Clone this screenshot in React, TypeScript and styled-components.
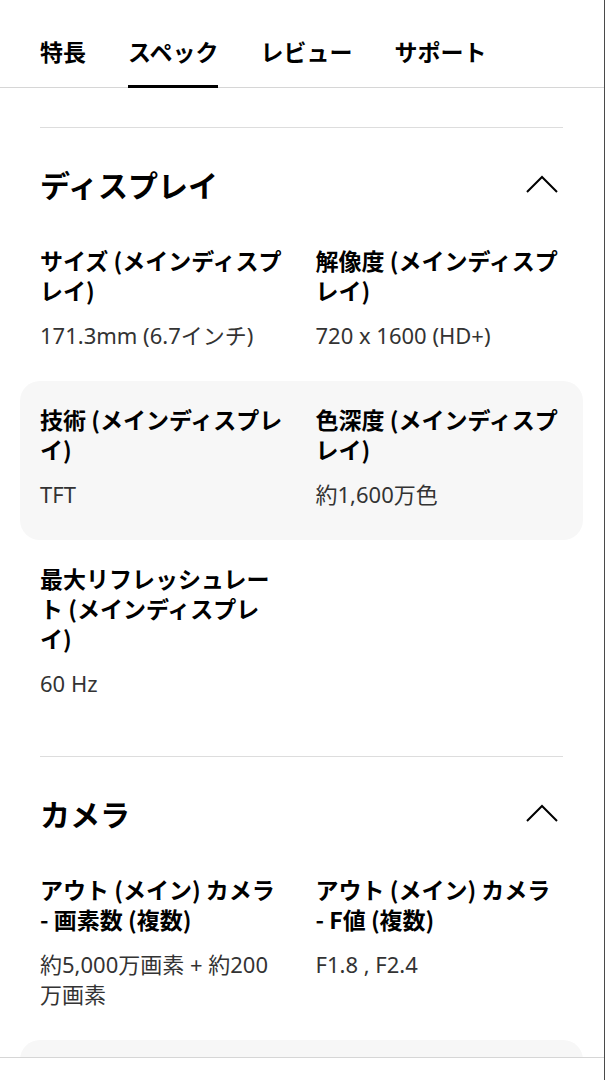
import React from "react";
import styled, { createGlobalStyle } from "styled-components";

const GlobalStyle = createGlobalStyle`
  body {
    margin: 0;
    background: #fff;
    font-family: "Noto Sans CJK JP", "Noto Sans", sans-serif;
    color: #000;
  }
`;

const Page = styled.div`
  width: 605px;
  height: 1080px;
  box-sizing: border-box;
  border-right: 1px solid #4a4a4a;
  overflow: hidden;
`;

const TabBar = styled.nav`
  display: flex;
  align-items: flex-start;
  gap: 42px;
  height: 88px;
  box-sizing: border-box;
  padding-left: 40px;
  border-bottom: 1px solid #d6d6d6;
`;

const Tab = styled.div<{ active?: boolean }>`
  height: 88px;
  box-sizing: border-box;
  padding-top: 35px;
  line-height: 32px;
  font-size: 23px;
  font-weight: 700;
  white-space: nowrap;
  border-bottom: 3px solid ${(props) => (props.active ? "#000" : "transparent")};
  margin-bottom: -1px;
`;

const Content = styled.main`
  padding: 39px 41px 0 40px;
`;

const Section = styled.section`
  border-top: 1px solid #dddddd;
  padding-bottom: 27px;
`;

const SectionHead = styled.div`
  display: flex;
  align-items: center;
  justify-content: space-between;
  padding: 36px 0 18px;
`;

const SectionTitle = styled.h2`
  margin: 0;
  font-size: 30px;
  line-height: 40px;
  font-weight: 700;
`;

const Chevron = styled.svg`
  width: 34px;
  height: 20px;
  margin-right: 4px;
  display: block;
`;

const Row = styled.div<{ shaded?: boolean }>`
  display: grid;
  grid-template-columns: 1fr 1fr;
  column-gap: 28px;
  min-height: 60px;
  margin: 0 -20px;
  padding: 23px 20px 31px;
  border-radius: 20px;
  background: ${(props) => (props.shaded ? "#f7f7f7" : "transparent")};
`;

const Item = styled.div`
  display: flex;
  flex-direction: column;
  gap: 15px;
`;

const Label = styled.div`
  font-size: 23px;
  line-height: 30px;
  font-weight: 700;
  color: #000;
`;

const Value = styled.div`
  font-family: "Noto Sans", "Noto Sans CJK JP", sans-serif;
  font-size: 22px;
  line-height: 30px;
  color: #333;
`;

const BottomBar = styled.div`
  position: fixed;
  left: 0;
  bottom: 0;
  width: 604px;
  height: 22px;
  background: #fff;
  border-top: 1px solid #d6d6d6;
`;

type Spec = { label: string; value: string };

type SpecGroup = { title: string; rows: Spec[][] };

const groups: SpecGroup[] = [
  {
    title: "ディスプレイ",
    rows: [
      [
        { label: "サイズ (メインディスプレイ)", value: "171.3mm (6.7インチ)" },
        { label: "解像度 (メインディスプレイ)", value: "720 x 1600 (HD+)" },
      ],
      [
        { label: "技術 (メインディスプレイ)", value: "TFT" },
        { label: "色深度 (メインディスプレイ)", value: "約1,600万色" },
      ],
      [{ label: "最大リフレッシュレート (メインディスプレイ)", value: "60 Hz" }],
    ],
  },
  {
    title: "カメラ",
    rows: [
      [
        {
          label: "アウト (メイン) カメラ -\u00a0画素数 (複数)",
          value: "約5,000万画素 + 約200万画素",
        },
        { label: "アウト (メイン) カメラ -\u00a0F値 (複数)", value: "F1.8 , F2.4" },
      ],
      // next row is scrolled below the fold, only its shaded top shows
      [],
    ],
  },
];

const tabs = ["特長", "スペック", "レビュー", "サポート"];

const App: React.FC = () => {
  return (
    <Page>
      <GlobalStyle />
      <TabBar>
        {tabs.map((t) => (
          <Tab key={t} active={t === "スペック"}>
            {t}
          </Tab>
        ))}
      </TabBar>
      <Content>
        {groups.map((group) => (
          <Section key={group.title}>
            <SectionHead>
              <SectionTitle>{group.title}</SectionTitle>
              <Chevron viewBox="0 0 34 20" fill="none">
                <path d="M2 18 L17 3 L32 18" stroke="#000" strokeWidth="2" />
              </Chevron>
            </SectionHead>
            {group.rows.map((row, i) => (
              <Row key={i} shaded={i % 2 === 1}>
                {row.map((spec) => (
                  <Item key={spec.label}>
                    <Label>{spec.label}</Label>
                    <Value>{spec.value}</Value>
                  </Item>
                ))}
              </Row>
            ))}
          </Section>
        ))}
      </Content>
      <BottomBar />
    </Page>
  );
};

export default App;
